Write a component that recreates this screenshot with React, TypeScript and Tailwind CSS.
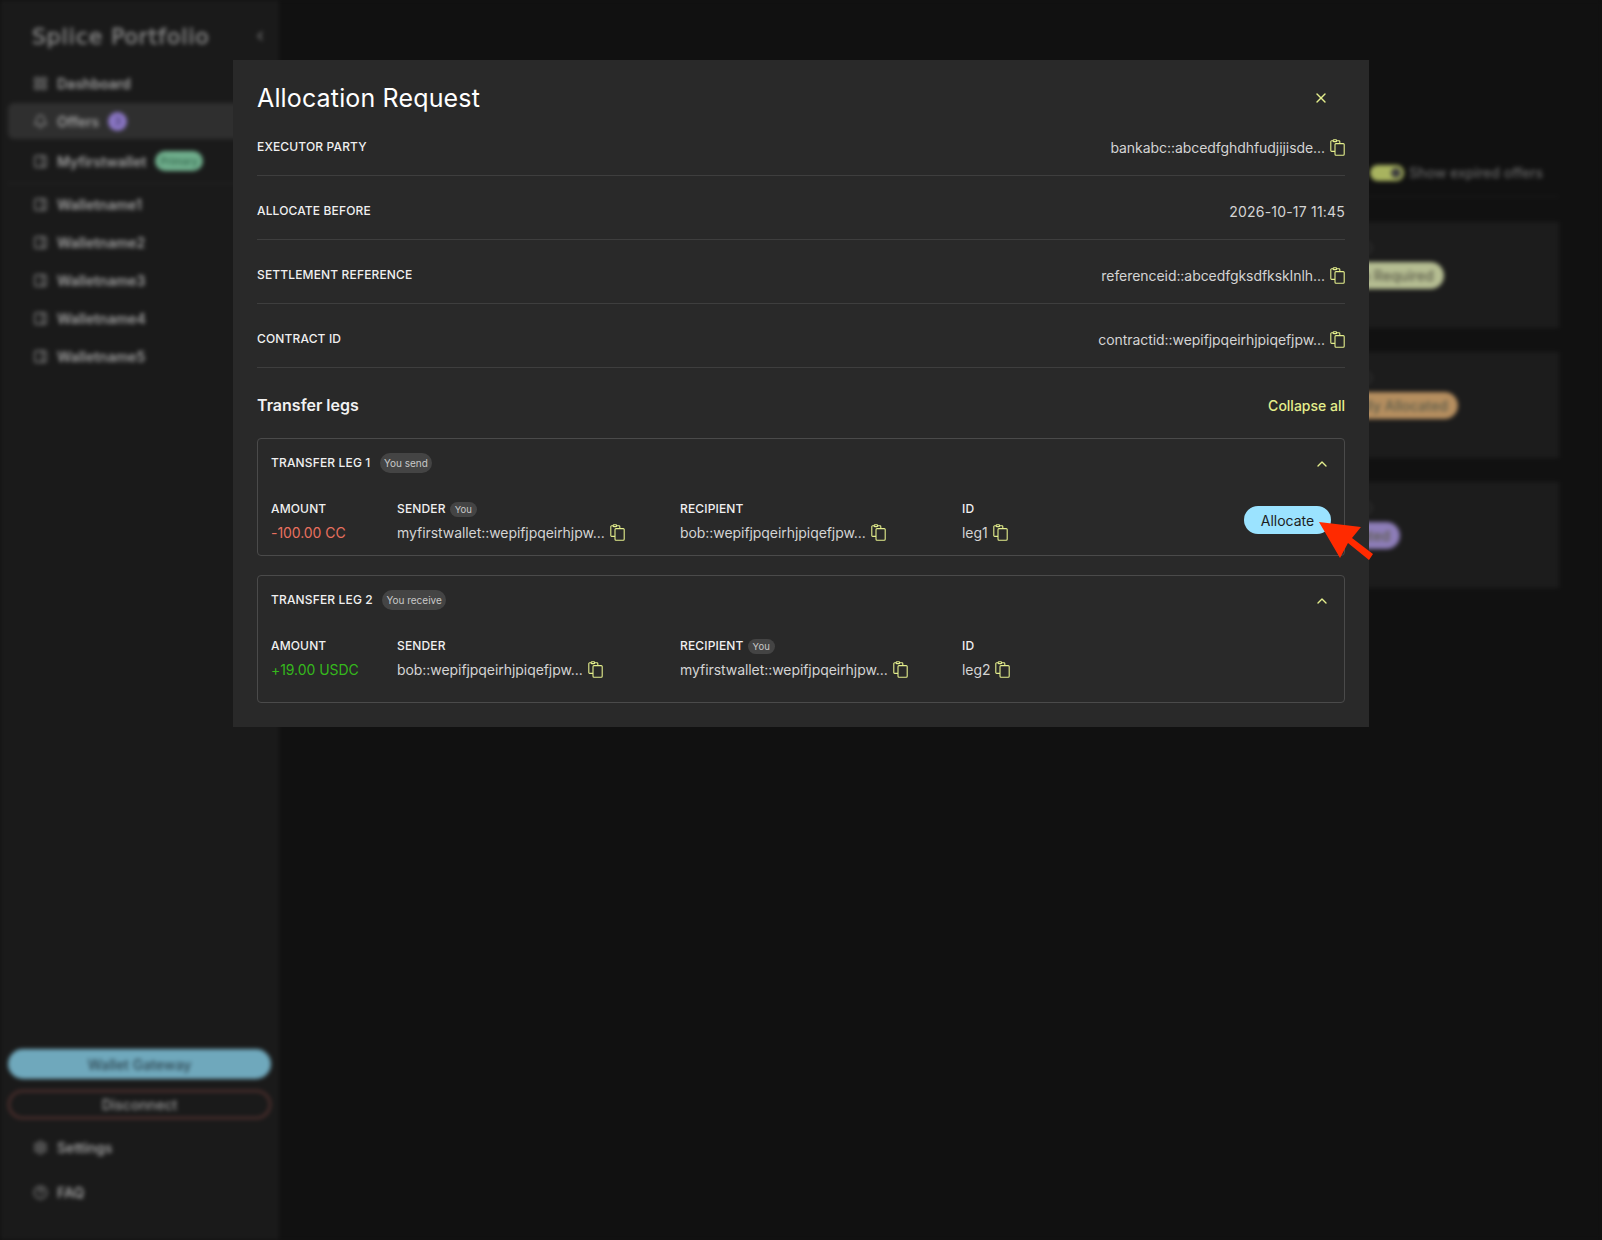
import { Bell, ChevronLeft, ChevronUp, CircleHelp, LayoutGrid, PanelRight, Settings, X } from "lucide-react";
import type { ReactNode } from "react";

const wallets = ["Walletname1", "Walletname2", "Walletname3", "Walletname4", "Walletname5"];

const details = [
    { label: "Executor Party", value: "bankabc::abcedfghdhfudjijisde...", copy: true },
    { label: "Allocate Before", value: "2026-10-17 11:45", copy: false },
    { label: "Settlement Reference", value: "referenceid::abcedfgksdfkskInlh...", copy: true },
    { label: "Contract ID", value: "contractid::wepifjpqeirhjpiqefjpw...", copy: true },
];

function CopyIcon() {
    return (
        <svg width="15" height="17" viewBox="0 0 15 17" fill="none" stroke="#e4ee8c" strokeWidth="1.1" className="shrink-0">
            <path d="M5 12.4H1.6a.8.8 0 0 1-.8-.8V2.6a.8.8 0 0 1 .8-.8H3" />
            <path d="M6.6 1.8H9a.8.8 0 0 1 .8.8v2" />
            <rect x="3.2" y="0.8" width="3.4" height="1.8" rx="0.7" />
            <rect x="5" y="4.6" width="9.2" height="11.6" rx="1" />
        </svg>
    );
}

function NavItem({ icon, label, active, children }: { icon: ReactNode; label: string; active?: boolean; children?: ReactNode }) {
    return (
        <div className={`flex h-9 items-center gap-[9px] rounded-md pl-[25px] text-[14px] font-semibold text-[#a0a0a0] ${active ? "bg-[#2f2f2f]" : ""}`}>
            {icon}
            <span>{label}</span>
            {children}
        </div>
    );
}

function Sidebar() {
    const iconClass = "h-[15px] w-[15px] text-[#8e8e8e]";
    return (
        <aside className="flex h-full w-[279px] shrink-0 flex-col bg-[#1a1a1a] px-2">
            <div className="flex h-[72px] items-center justify-between pl-6 pr-1">
                <span className="font-['DejaVu_Sans',sans-serif] text-[22px] font-normal tracking-[0.9px] text-[#8a8a8a] [-webkit-text-stroke:0.5px_#8a8a8a]">Splice Portfolio</span>
                <ChevronLeft className="h-3.5 w-3.5 text-[#777777]" strokeWidth={3} />
            </div>
            <div className="flex flex-col">
                <div className="mt-[-7px]">
                    <NavItem icon={<LayoutGrid className={iconClass} />} label="Dashboard" />
                </div>
                <div className="mt-0.5">
                    <NavItem icon={<Bell className={iconClass} />} label="Offers" active>
                        <span className="flex h-[19px] w-[19px] items-center justify-center rounded-full bg-[#8a76c4] text-[11px] text-[#4f4378]">3</span>
                    </NavItem>
                </div>
                <div className="mt-1">
                    <NavItem icon={<PanelRight className={iconClass} />} label="Myfirstwallet">
                        <span className="rounded-full bg-[#6fae8c] px-[5px] py-[3px] text-[10px] leading-[14px] font-medium text-[#35684e]">Primary</span>
                    </NavItem>
                </div>
                <div className="mt-1 mb-0.5 h-px bg-[#262626]" />
                <div className="flex flex-col gap-0.5">
                    {wallets.map((w) => (
                        <NavItem key={w} icon={<PanelRight className={iconClass} />} label={w} />
                    ))}
                </div>
            </div>
            <div className="mt-auto flex flex-col pb-[30px]">
                <button className="h-[30px] rounded-full bg-[#6fa8bc] text-[14px] font-medium text-[#2d4550]">Wallet Gateway</button>
                <button className="mt-[11px] h-[29px] rounded-full border-2 border-[#5a3431] text-[14px] font-medium text-[#9a9a9a]">Disconnect</button>
                <div className="mt-2.5">
                    <NavItem icon={<Settings className={iconClass} />} label="Settings" />
                </div>
                <div className="mt-[9px]">
                    <NavItem icon={<CircleHelp className={iconClass} />} label="FAQ" />
                </div>
            </div>
        </aside>
    );
}

function OfferCard({ status, tone }: { status: string; tone: string }) {
    return (
        <div className="h-[106px] bg-[#1c1c1c] pl-[991px]">
            <div className="h-10 pt-5 pl-[43px]">
                <div className="h-3 w-3 rounded-full border border-[#444444]" />
            </div>
            <div className="flex">
                <span className={`rounded-full px-2.5 py-[5px] text-[14px] leading-[17px] font-medium text-[#5a5a48] ${tone}`}>{status}</span>
            </div>
        </div>
    );
}

function MainBehind() {
    return (
        <main className="flex-1 bg-[#111111] pr-[43px] pl-[47px]">
            <div className="flex h-[197px] items-end justify-end border-b border-[#1b1b1b] pb-[13px]">
                <div className="flex items-center gap-[5px] pr-[16px]">
                    <span className="flex h-4 w-[34px] items-center justify-end rounded-full bg-[#a8b35f] px-[3px]">
                        <span className="h-2.5 w-2.5 rounded-full bg-[#3f3f3f]" />
                    </span>
                    <span className="text-[14px] font-medium text-[#666666]">Show expired offers</span>
                </div>
            </div>
            <div className="mt-[25px] flex flex-col gap-6">
                <OfferCard status="Action Required" tone="bg-[#b5bd92]" />
                <OfferCard status="Partially Allocated" tone="bg-[#b58e5f]" />
                <OfferCard status="Allocated" tone="bg-[#8d7db8]" />
            </div>
        </main>
    );
}

function Field({ label, you, className, children }: { label: string; you?: boolean; className: string; children: ReactNode }) {
    return (
        <div className={className}>
            <div className="flex h-4 items-center gap-1 text-[12px] font-medium tracking-[0.15px] text-[#f0f0f0]">
                {label}
                {you && <span className="rounded-full bg-[#444444] px-[5px] text-[9.5px] leading-[15px] font-normal text-[#c8c8c8]">You</span>}
            </div>
            <div className="mt-[5px] flex h-5 items-center gap-[5px] text-[14px] tracking-[-0.06px] text-[#d4d4d4]">{children}</div>
        </div>
    );
}

function Leg({ title, tag, pad, children }: { title: string; tag: string; pad: string; children: ReactNode }) {
    return (
        <div className={`rounded-[4px] border border-[#4a4a4a] px-[13px] ${pad}`}>
            <div className="flex h-12 items-center gap-[9px]">
                <span className="text-[12px] font-medium tracking-[0.15px] text-[#f0f0f0]">{title}</span>
                <span className="rounded-full bg-[#444444] px-[4.5px] text-[10px] leading-[20px] text-[#c8c8c8]">{tag}</span>
                <ChevronUp className="mt-0.5 mr-px ml-auto h-4 w-4 text-[#e4ee8c]" />
            </div>
            <div className="flex items-start pt-3.5">{children}</div>
        </div>
    );
}

function AllocationModal() {
    return (
        <div className="absolute top-[60px] left-[233px] w-[1136px] bg-[#292929] px-6 py-6 font-['Inter',sans-serif]">
            <div className="flex h-7 items-center justify-between">
                <h2 className="text-[25px] leading-7 font-normal tracking-[0.15px] text-white">Allocation Request</h2>
                <X className="mr-4 h-4 w-4 text-[#e4ee8c]" />
            </div>
            {details.map((row) => (
                <div key={row.label} className="flex h-16 items-start justify-between border-b border-[#3e3e3e] pt-[25px]">
                    <span className="text-[12px] leading-5 font-medium tracking-[0.15px] text-[#f0f0f0] uppercase">{row.label}</span>
                    <span className={`flex h-5 items-center gap-[5px] text-[14px] text-[#d4d4d4] ${row.copy ? "tracking-[-0.06px]" : "tracking-[0.2px]"}`}>
                        {row.value}
                        {row.copy && <CopyIcon />}
                    </span>
                </div>
            ))}
            <div className="mt-6 mb-5 flex h-[26px] items-center justify-between">
                <h3 className="text-[16px] font-semibold text-[#f2f2f2]">Transfer legs</h3>
                <button className="text-[14px] font-medium text-[#e4ee8c]">Collapse all</button>
            </div>
            <div className="flex flex-col gap-[19px]">
                <Leg title="TRANSFER LEG 1" tag="You send" pad="pb-[13px]">
                    <Field label="AMOUNT" className="w-[126px]">
                        <span className="text-[#e8705f]">-100.00 CC</span>
                    </Field>
                    <Field label="SENDER" you className="w-[283px]">
                        myfirstwallet::wepifjpqeirhjpw...
                        <CopyIcon />
                    </Field>
                    <Field label="RECIPIENT" className="w-[282px]">
                        bob::wepifjpqeirhjpiqefjpw...
                        <CopyIcon />
                    </Field>
                    <Field label="ID" className="w-[100px]">
                        leg1
                        <CopyIcon />
                    </Field>
                    <button className="mt-[5px] ml-auto h-7 w-[87px] rounded-full bg-[#9be3ff] text-[14px] text-[#1d1d1d]">Allocate</button>
                </Leg>
                <Leg title="TRANSFER LEG 2" tag="You receive" pad="pb-[23px]">
                    <Field label="AMOUNT" className="w-[126px]">
                        <span className="text-[#35b81c]">+19.00 USDC</span>
                    </Field>
                    <Field label="SENDER" className="w-[283px]">
                        bob::wepifjpqeirhjpiqefjpw...
                        <CopyIcon />
                    </Field>
                    <Field label="RECIPIENT" you className="w-[282px]">
                        myfirstwallet::wepifjpqeirhjpw...
                        <CopyIcon />
                    </Field>
                    <Field label="ID" className="w-[100px]">
                        leg2
                        <CopyIcon />
                    </Field>
                </Leg>
            </div>
        </div>
    );
}

export default function App() {
    return (
        <div className="relative h-[1240px] w-[1602px] overflow-hidden bg-[#111111] font-['Inter',sans-serif]">
            <div className="flex h-full blur-[2px]">
                <Sidebar />
                <MainBehind />
            </div>
            <AllocationModal />
            {/* red annotation arrow pointing at the button */}
            <svg className="absolute top-[515px] left-[1312px]" width="70" height="55" viewBox="1312 515 70 55">
                <polygon points="1319,522 1361,527 1352,538 1373,554 1369,560 1348,543 1340,558" fill="#ff2a00" />
            </svg>
        </div>
    );
}
